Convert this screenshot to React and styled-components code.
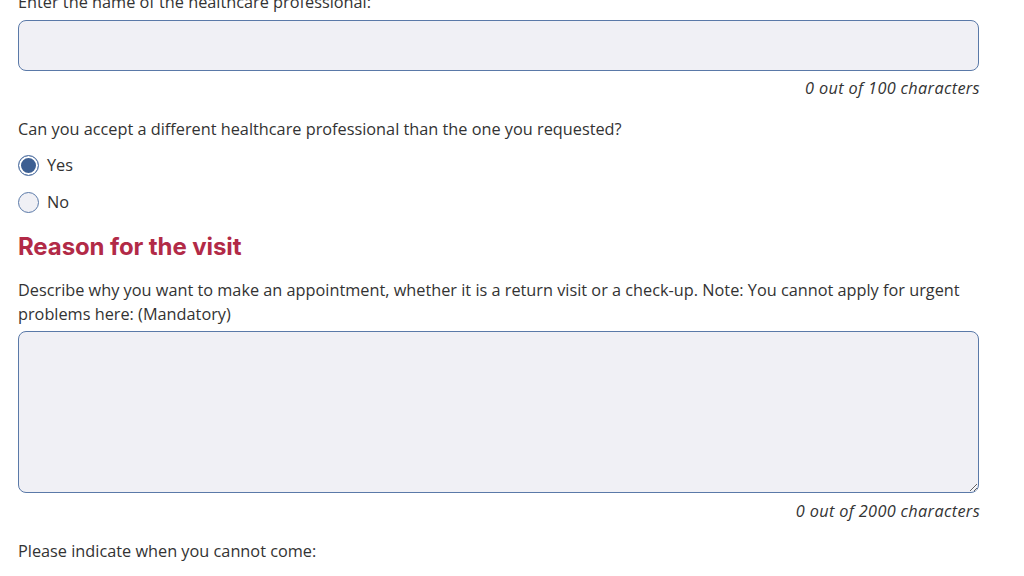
import React, { useState } from "react";
import styled, { createGlobalStyle } from "styled-components";

const Global = createGlobalStyle`
  html, body { margin: 0; padding: 0; background: #fff; }
  body { font-family: "Open Sans", "Liberation Sans", sans-serif; color: #333; }
  * { box-sizing: border-box; }
`;

const Page = styled.div`
  padding: 0 45px 0 18px;
  width: 1024px;
  overflow: hidden;
  height: 576px;
`;

const Field = styled.div`
  display: flex;
  flex-direction: column;
  margin-top: ${(p) => p.$mt || 0}px;
`;

const Label = styled.label`
  font-size: 16.3px;
  line-height: 24px;
  color: #333;
  display: block;
`;

const TextInput = styled.input`
  margin-top: 6px;
  width: 961px;
  height: 51px;
  border: 1px solid #5a79a8;
  border-radius: 8px;
  background: #f0f0f5;
  font: inherit;
  padding: 0 12px;
  outline: none;
`;

const TextArea = styled.textarea`
  margin-top: 5px;
  width: 961px;
  height: 162px;
  border: 1px solid #5a79a8;
  border-radius: 8px;
  background: #f0f0f5;
  font: inherit;
  padding: 12px;
  outline: none;
  resize: vertical;
  display: block;
`;

const Counter = styled.div`
  width: 962px;
  text-align: right;
  font-style: italic;
  font-size: 16.3px;
  letter-spacing: 0.35px;
  line-height: 24px;
  color: #333;
  margin-top: ${(p) => p.$mt || 0}px;
`;

const Options = styled.div`
  display: flex;
  flex-direction: column;
  gap: 13px;
  margin-top: 12px;
`;

const Option = styled.label`
  display: flex;
  align-items: center;
  gap: 8px;
  font-size: 16.3px;
  line-height: 24px;
  cursor: pointer;
`;

const RadioCircle = styled.span`
  width: 21px;
  height: 21px;
  border-radius: 50%;
  border: 1.5px solid #5a79a8;
  background: ${(p) => (p.$checked ? "#3d5f92" : "#f0f0f5")};
  box-shadow: ${(p) => (p.$checked ? "inset 0 0 0 2px #fff" : "none")};
  flex-shrink: 0;
`;

const HiddenRadio = styled.input`
  position: absolute;
  opacity: 0;
  width: 0;
  height: 0;
`;

const Heading = styled.h2`
  font-family: Inter, "Liberation Sans", sans-serif;
  font-weight: 700;
  font-size: 24px;
  line-height: 32px;
  color: #b22a47;
  margin: 17px 0 0 0;
  letter-spacing: -0.1px;
`;

const Description = styled.p`
  margin: 15px 0 0 0;
  font-size: 16.3px;
  line-height: 24px;
  max-width: 962px;
`;

export default function App() {
  const [choice, setChoice] = useState("yes");
  return (
    <>
      <Global />
      <Page>
        <Field $mt={-10}>
          <Label htmlFor="hp">Enter the name of the healthcare professional:</Label>
          <TextInput id="hp" />
          <Counter $mt={5}>0 out of 100 characters</Counter>
        </Field>
        <Field $mt={17}>
          <Label as="div">Can you accept a different healthcare professional than the one you requested?</Label>
          <Options>
            <Option>
              <HiddenRadio type="radio" name="accept" checked={choice === "yes"} onChange={() => setChoice("yes")} />
              <RadioCircle $checked={choice === "yes"} />
              Yes
            </Option>
            <Option>
              <HiddenRadio type="radio" name="accept" checked={choice === "no"} onChange={() => setChoice("no")} />
              <RadioCircle $checked={choice === "no"} />
              No
            </Option>
          </Options>
        </Field>
        <Heading>Reason for the visit</Heading>
        <Field>
          <Description>
            Describe why you want to make an appointment, whether it is a return visit or a check-up. Note: You cannot apply for urgent problems here: (Mandatory)
          </Description>
          <TextArea />
          <Counter $mt={6}>0 out of 2000 characters</Counter>
        </Field>
        <Field $mt={16}>
          <Label>Please indicate when you cannot come:</Label>
        </Field>
      </Page>
    </>
  );
}
